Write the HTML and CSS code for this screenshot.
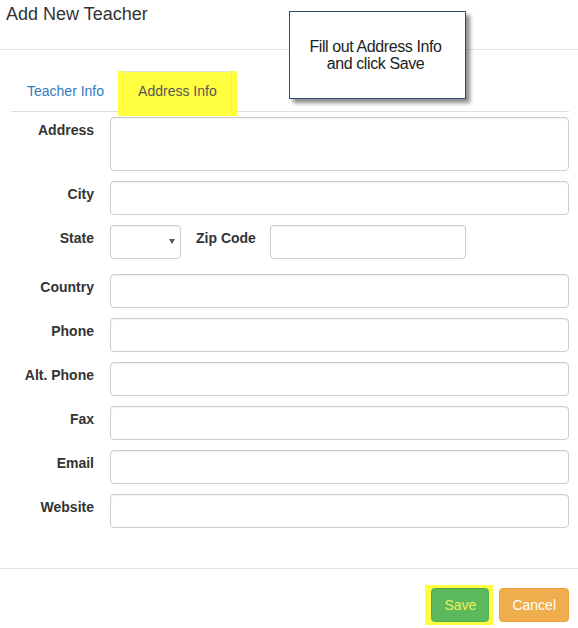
FILE: index.html
```html
<!DOCTYPE html>
<html lang="en">
<head>
  <meta charset="UTF-8">
  <meta name="viewport" content="width=device-width, initial-scale=1.0">
  <title>Add New Teacher</title>
  <link rel="stylesheet" href="styles.css">
</head>
<body>
<div class="modal">
  <!-- Header -->
  <div class="modal-header">
    <h4 class="modal-title">Add New Teacher</h4>
  </div>

  <!-- Tutorial callout -->
  <div class="callout">Fill out Address Info<br>and click Save</div>

  <!-- Body -->
  <div class="modal-body">
    <ul class="nav-tabs">
      <li><a href="#">Teacher Info</a></li>
      <li class="active"><a href="#">Address Info</a></li>
    </ul>

    <form class="form">
      <div class="form-row">
        <label class="form-label">Address</label>
        <textarea class="form-control form-textarea"></textarea>
      </div>
      <div class="form-row">
        <label class="form-label">City</label>
        <input type="text" class="form-control">
      </div>
      <div class="form-row form-row-wide">
        <label class="form-label">State</label>
        <div class="state-zip">
          <span class="select-wrap">
            <select class="form-control form-select"></select>
          </span>
          <label class="form-label zip-label">Zip Code</label>
          <input type="text" class="form-control zip-input">
        </div>
      </div>
      <div class="form-row">
        <label class="form-label">Country</label>
        <input type="text" class="form-control">
      </div>
      <div class="form-row">
        <label class="form-label">Phone</label>
        <input type="text" class="form-control">
      </div>
      <div class="form-row">
        <label class="form-label">Alt. Phone</label>
        <input type="text" class="form-control">
      </div>
      <div class="form-row">
        <label class="form-label">Fax</label>
        <input type="text" class="form-control">
      </div>
      <div class="form-row">
        <label class="form-label">Email</label>
        <input type="text" class="form-control">
      </div>
      <div class="form-row">
        <label class="form-label">Website</label>
        <input type="text" class="form-control">
      </div>
    </form>
  </div>

  <!-- Footer -->
  <div class="modal-footer">
    <span class="highlight"><button class="btn btn-save">Save</button></span>
    <button class="btn btn-cancel">Cancel</button>
  </div>
</div>
</body>
</html>
```

FILE: styles.css
```css
body, html {
  margin: 0;
  padding: 0;
  font-family: "Liberation Sans", Arial, sans-serif;
  font-size: 14px;
  color: #333;
  background: white;
}

.modal {
  position: relative;
  width: 578px;
}

.modal-header {
  height: 50px;
  box-sizing: border-box;
  border-bottom: 1px solid #e5e5e5;
  padding: 2px 0 0 6px;
}

.modal-title {
  margin: 0;
  font-size: 18px;
  font-weight: normal;
  line-height: 24px;
  color: #333;
}

.callout {
  position: absolute;
  left: 289px;
  top: 11px;
  width: 177px;
  height: 88px;
  box-sizing: border-box;
  border: 1px solid #2b4a78;
  background: white;
  box-shadow: 4px 4px 4px rgba(0, 0, 0, 0.45);
  display: flex;
  align-items: center;
  justify-content: center;
  text-align: center;
  font-size: 16px;
  line-height: 17px;
  letter-spacing: -0.4px;
  color: #222;
  padding-right: 4px;
}

.modal-body {
  padding: 21px 9px 40px 11px;
}

.nav-tabs {
  display: flex;
  margin: 0;
  padding: 0;
  list-style: none;
  border-bottom: 1px solid #ddd;
}

.nav-tabs li {
  margin-right: 3px;
  margin-bottom: -1px;
}

.nav-tabs a {
  display: block;
  padding: 9px 15px 10px;
  line-height: 20px;
  border: 1px solid transparent;
  border-radius: 4px 4px 0 0;
  color: #337ab7;
  text-decoration: none;
}

.nav-tabs li.active {
  position: relative;
}

/* yellow tutorial highlight behind the active tab */
.nav-tabs li.active::before {
  content: "";
  position: absolute;
  left: -5px;
  right: -5px;
  top: 0;
  bottom: -4px;
  background: #ffff40;
}

.nav-tabs li.active a {
  position: relative;
  padding-left: 14px;
  padding-right: 14px;
  color: #555;
  border-color: #ddd #ddd transparent;
}

.form {
  margin-top: 5px;
}

.form-row {
  display: grid;
  grid-template-columns: 83px 1fr;
  column-gap: 16px;
  margin-bottom: 10px;
}

.form-row:last-child {
  margin-bottom: 0;
}

.form-row-wide {
  margin-bottom: 15px;
}

.form-label {
  text-align: right;
  font-weight: bold;
  line-height: 20px;
  padding-top: 3px;
  white-space: nowrap;
}

.form-control {
  display: block;
  width: 100%;
  height: 34px;
  box-sizing: border-box;
  margin: 0;
  border: 1px solid #ccc;
  border-radius: 4px;
  background: white;
  box-shadow: inset 0 1px 1px rgba(0, 0, 0, 0.05);
  font-family: inherit;
  font-size: 14px;
}

.form-textarea {
  height: 54px;
  resize: none;
}

.state-zip {
  display: flex;
  align-items: flex-start;
}

.select-wrap {
  position: relative;
  width: 71px;
}

.form-select {
  appearance: none;
  -webkit-appearance: none;
}

.select-wrap::after {
  content: "";
  position: absolute;
  right: 6px;
  top: 14px;
  border-top: 5px solid #555;
  border-left: 3px solid transparent;
  border-right: 3px solid transparent;
}

.zip-label {
  margin-left: 15px;
  text-align: left;
  width: 74px;
}

.zip-input {
  width: 196px;
}

.modal-footer {
  border-top: 1px solid #e5e5e5;
  padding: 16px 9px 0 0;
  display: flex;
  justify-content: flex-end;
  align-items: flex-start;
}

.highlight {
  display: inline-flex;
  background: #ffff40;
  padding: 3px 4px 3px 6px;
}

.btn {
  font-family: inherit;
  font-size: 14px;
  line-height: 20px;
  padding: 6px 12px;
  border: 1px solid transparent;
  border-radius: 4px;
  color: white;
  cursor: pointer;
}

.btn-save {
  background: #5cb85c;
  border-color: #4cae4c;
  color: #eef25a;
}

.btn-cancel {
  margin-top: 3px;
  margin-left: 6px;
  background: #f0ad4e;
  border-color: #eea236;
}
```
